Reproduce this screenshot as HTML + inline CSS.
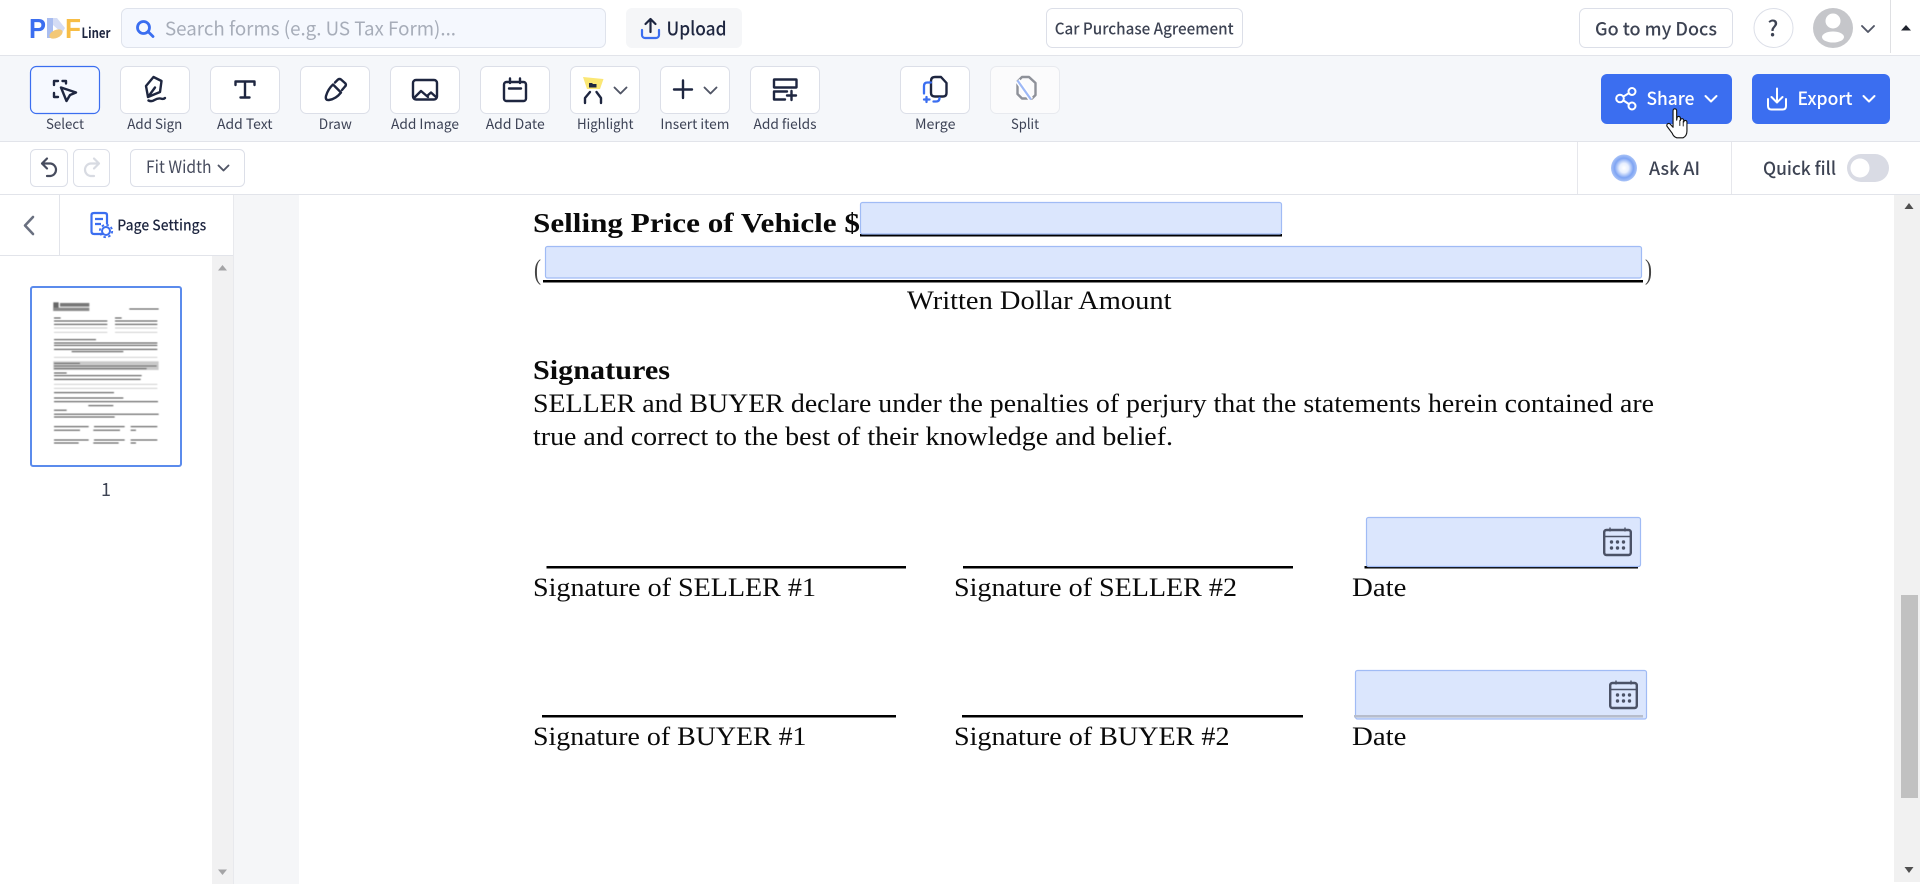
<!DOCTYPE html>
<html><head><meta charset="utf-8"><title>PDFLiner</title>
<style>
html,body{margin:0;padding:0;width:1920px;height:884px;overflow:hidden;background:#fff}
svg{position:absolute;left:0;top:0;display:block}
.u{font-family:"Noto Sans CJK JP","Liberation Sans",sans-serif}
.l{font-size:14px;fill:#3d4356}
.d{font-family:"Liberation Serif",serif;font-size:26px;fill:#0a0a0a}
.b{font-weight:700}
.box{fill:#fff;stroke:#dcdfe8;stroke-width:1}
.ic{fill:none;stroke:#1e2640;stroke-width:2.4;stroke-linecap:round;stroke-linejoin:round}
.ch{fill:none;stroke:#515666;stroke-width:1.9;stroke-linecap:round;stroke-linejoin:round}
.f{fill:#dbe6fd;stroke:#a0bbf5;stroke-width:1.2}
.w{fill:none;stroke:#fff;stroke-width:2;stroke-linecap:round;stroke-linejoin:round}
</style></head>
<body>
<svg width="1920" height="884" viewBox="0 0 1920 884" xmlns="http://www.w3.org/2000/svg">
<defs>
<radialGradient id="ai" cx="50%" cy="50%" r="50%"><stop offset="0" stop-color="#fff"/><stop offset=".35" stop-color="#e8effe"/><stop offset=".72" stop-color="#7ea4f3"/><stop offset="1" stop-color="#a9c3f7"/></radialGradient>
<filter id="bl" x="-5%" y="-5%" width="110%" height="110%"><feGaussianBlur stdDeviation="1.6"/></filter>
<g id="cal"><rect x="1.2" y="3" width="26.6" height="25" rx="2.2" fill="none" stroke="#4b5266" stroke-width="2.4"/><path d="M1 9.5H28" stroke="#4b5266" stroke-width="1.6"/><path d="M7 0.5V4.5M22 0.5V4.5" stroke="#4b5266" stroke-width="1.4"/><g fill="#4b5266"><circle cx="8.5" cy="15" r="1.7"/><circle cx="14.5" cy="15" r="1.7"/><circle cx="20.5" cy="15" r="1.7"/><circle cx="8.5" cy="21" r="1.7"/><circle cx="14.5" cy="21" r="1.7"/><circle cx="20.5" cy="21" r="1.7"/></g></g>
</defs>

<!-- header -->
<rect width="1920" height="55" fill="#fff"/>
<rect y="55" width="1920" height="1" fill="#e2e4ea"/>
<text x="29" y="38" font-family="Liberation Sans" font-weight="700" font-size="28" fill="#3b6ef0" textLength="17" lengthAdjust="spacingAndGlyphs">P</text>
<polygon points="47,18 53,18 53,38 47,38" fill="#a9bdf0"/>
<polygon points="53,18 57,18 65,28 62,33 53,25" fill="#d4dcf5"/>
<ellipse cx="56" cy="34" rx="7" ry="4" fill="#f3c877" transform="rotate(-25 56 34)"/>
<text x="65" y="38" font-family="Liberation Sans" font-weight="700" font-size="28" fill="#f7bd45" textLength="16" lengthAdjust="spacingAndGlyphs">F</text>
<text x="81.5" y="38" class="u" font-weight="700" font-size="14" fill="#1e2640" textLength="29" lengthAdjust="spacingAndGlyphs">Liner</text>

<rect x="121.5" y="8.5" width="484" height="39" rx="6" fill="#f5f8fe" stroke="#dfe3ec"/>
<circle cx="143.500" cy="27.500" r="6" fill="none" stroke="#3b6ef0" stroke-width="2.800"/>
<path d="M148.500 32L153 36.500" stroke="#3b6ef0" stroke-width="2.800" stroke-linecap="round"/>
<text x="165" y="35.500" class="u" font-size="19" fill="#a7adb9" textLength="291" lengthAdjust="spacingAndGlyphs">Search forms (e.g. US Tax Form)...</text>

<rect x="626" y="8" width="116" height="40" rx="6" fill="#f5f6f8"/>
<path d="M650.5 32V19M645.5 24l5-5 5 5" fill="none" stroke="#1e2640" stroke-width="2.2" stroke-linecap="round" stroke-linejoin="round"/>
<path d="M642 30v5a3 3 0 0 0 3 3h11a3 3 0 0 0 3-3v-5" fill="none" stroke="#3b6ef0" stroke-width="2.2" stroke-linecap="round"/>
<text x="666.5" y="35.500" class="u" font-size="19" font-weight="500" fill="#1e2640" textLength="60" lengthAdjust="spacingAndGlyphs">Upload</text>

<rect x="1046.5" y="8.5" width="196" height="39" rx="6" class="box" stroke="#e4e6ec"/>
<text x="1054.7" y="34.500" class="u" font-size="16" font-weight="500" fill="#3d4353" textLength="179" lengthAdjust="spacingAndGlyphs">Car Purchase Agreement</text>

<rect x="1579.5" y="8.5" width="153" height="39" rx="6" class="box"/>
<text x="1595" y="35.500" class="u" font-size="18.5" font-weight="500" fill="#3d4353" textLength="122" lengthAdjust="spacingAndGlyphs">Go to my Docs</text>
<circle cx="1773.5" cy="28" r="19.5" class="box"/>
<text x="1767.500" y="36" class="u" font-size="22" font-weight="500" fill="#3d4353">?</text>
<circle cx="1833" cy="28" r="20" fill="#c5c6ca"/>
<circle cx="1833" cy="21" r="7.5" fill="#fff"/>
<ellipse cx="1833" cy="37" rx="11" ry="5.5" fill="#fff"/>
<path d="M1862 26l6 6 6-6" class="ch" stroke-width="2.2"/>
<rect x="1890" y="0" width="1" height="53" fill="#dfe0e3"/>
<polygon points="1906,25 1911,30.5 1901,30.5" fill="#20242e"/>

<!-- toolbar -->
<rect y="56" width="1920" height="85" fill="#f5f7fa"/>
<rect y="141" width="1920" height="1" fill="#e2e4ea"/>

<rect x="30.5" y="66.5" width="69" height="47" rx="6" fill="#f6f9ff" stroke="#3b6ef0" stroke-width="1.2"/>
<rect x="120.5" y="66.5" width="69" height="47" rx="6" class="box"/>
<rect x="210.5" y="66.5" width="69" height="47" rx="6" class="box"/>
<rect x="300.5" y="66.5" width="69" height="47" rx="6" class="box"/>
<rect x="390.5" y="66.5" width="69" height="47" rx="6" class="box"/>
<rect x="480.5" y="66.5" width="69" height="47" rx="6" class="box"/>
<rect x="570.5" y="66.5" width="69" height="47" rx="6" class="box"/>
<rect x="660.5" y="66.5" width="69" height="47" rx="6" class="box"/>
<rect x="750.5" y="66.5" width="69" height="47" rx="6" class="box"/>
<rect x="900.5" y="66.5" width="69" height="47" rx="6" class="box"/>
<rect x="990.5" y="66.5" width="69" height="47" rx="6" fill="#fbfbfc" stroke="#e8eaef"/>

<!-- select -->
<path class="ic" d="M54 85v-4h4M62.500 81H66v2.500M54 93v4h4"/>
<path class="ic" d="M61 87.500L76 92.500L70 95L66.500 101Z"/>
<!-- sign -->
<path class="ic" d="M146 86L153.500 77L161.500 81L160 92L148 97ZM148 97L155 87.500"/>
<path class="ic" d="M148.500 100.500q3 1.500 6-0.500t6-1.500q3 1 4.500-0.500"/>
<!-- text -->
<path class="ic" d="M235.500 85v-3.500h19V85M245 81.500v16M240.500 97.500h9"/>
<!-- draw -->
<path class="ic" d="M333 84.500Q328 89 326 96Q325 100.500 329 100Q336 99 341 92.500ZM335 82.500L338 79.500Q339.500 78.500 341 79.500L345.500 83.500Q346.500 85 345 86.500L342 90"/>
<!-- image -->
<rect x="413" y="80" width="24" height="19.500" rx="3" class="ic"/>
<path class="ic" stroke-width="2" d="M414 98L421 91L428 97M427 96L431 92.500L436 97"/>
<!-- date -->
<rect x="504" y="82" width="22" height="19" rx="2.500" class="ic"/>
<path class="ic" d="M510 78.500V83M520 78.500V83M509 88.500H521"/>
<!-- highlight -->
<polygon points="583,77 603.500,79 600,89 587,89" fill="#fbe775"/>
<path d="M589 83h3l1 1h3.500v3.500H589Z" fill="#1e2640"/>
<path class="ic" d="M585 103V98L590 92M596.500 92L601 98V103"/>
<path class="ch" d="M614.500 87.500l6 6 6-6"/>
<!-- plus -->
<path class="ic" stroke-width="2.600" d="M683 80.500V98M674 89.500H692"/>
<path class="ch" d="M704.500 87.500l6 6 6-6"/>
<!-- add fields -->
<rect x="774" y="79.500" width="22.500" height="8" class="ic" stroke-linecap="butt" rx=".5"/>
<path class="ic" d="M787 91.500H774V99.500H785M791.500 91V100M787 95.500H796"/>
<!-- merge -->
<path class="ic" d="M935 77H941L946.500 83V93Q946.500 96.500 943 96.500H935Q931 96.500 931 93V81Q931 77 935 77Z"/>
<path d="M931 82.500H927.500Q924 82.500 924 86V93.500M926.500 97V102M924 99.500H929.500M933.500 101.500H936Q939.500 101.500 939.500 98" fill="none" stroke="#3b6ef0" stroke-width="2.300" stroke-linecap="round"/>
<!-- split -->
<path d="M1022 77H1029L1035.500 83V95L1032 98.500H1022L1017.500 94V81.500Z" fill="none" stroke="#8e9199" stroke-width="2.400" stroke-linejoin="round"/>
<path d="M1017.500 80.500L1031 99.500" stroke="#fff" stroke-width="5"/>
<path d="M1017.500 80.500L1031 99.500" stroke="#9db8f6" stroke-width="2.200"/>

<g class="u l">
<text x="46" y="129" textLength="38" lengthAdjust="spacingAndGlyphs">Select</text>
<text x="127.300" y="129" textLength="55" lengthAdjust="spacingAndGlyphs">Add Sign</text>
<text x="217" y="129" textLength="55.500" lengthAdjust="spacingAndGlyphs">Add Text</text>
<text x="318.800" y="129" textLength="33" lengthAdjust="spacingAndGlyphs">Draw</text>
<text x="391" y="129" textLength="68" lengthAdjust="spacingAndGlyphs">Add Image</text>
<text x="485.700" y="129" textLength="59" lengthAdjust="spacingAndGlyphs">Add Date</text>
<text x="577" y="129" textLength="56.500" lengthAdjust="spacingAndGlyphs">Highlight</text>
<text x="660.400" y="129" textLength="69" lengthAdjust="spacingAndGlyphs">Insert item</text>
<text x="753.500" y="129" textLength="63" lengthAdjust="spacingAndGlyphs">Add fields</text>
<text x="915" y="129" textLength="40.500" lengthAdjust="spacingAndGlyphs">Merge</text>
<text x="1011" y="129" textLength="28" lengthAdjust="spacingAndGlyphs">Split</text>
</g>

<!-- share / export -->
<rect x="1601" y="74" width="131" height="50" rx="6" fill="#3b6ef0"/>
<circle cx="1620" cy="98.500" r="3.800" class="w"/>
<circle cx="1632" cy="91.500" r="3.500" class="w"/>
<circle cx="1632" cy="106" r="3.500" class="w"/>
<path class="w" d="M1623.500 96.500L1628.800 93.200M1623.500 100.500L1628.800 104"/>
<text x="1646.500" y="105" class="u" font-size="18" font-weight="500" fill="#fff" textLength="48" lengthAdjust="spacingAndGlyphs">Share</text>
<path class="w" d="M1705.500 96l5.500 5.500 5.500-5.500"/>
<rect x="1752" y="74" width="138" height="50" rx="6" fill="#3b6ef0"/>
<path class="w" d="M1777 88.500V102M1771.500 97l5.500 5.500 5.500-5.500M1768 99v7q0 3.500 3.500 3.500h11q3.500 0 3.500-3.500v-7"/>
<text x="1797.500" y="105" class="u" font-size="18" font-weight="500" fill="#fff" textLength="55" lengthAdjust="spacingAndGlyphs">Export</text>
<path class="w" d="M1863.500 96l5.500 5.500 5.500-5.500"/>

<!-- second row -->
<rect y="194" width="1920" height="1" fill="#e2e4ea"/>
<rect x="30.500" y="149.500" width="37" height="37" rx="5" class="box"/>
<rect x="73.500" y="149.500" width="36" height="37" rx="5" class="box"/>
<path d="M47 158.500L42 163.500L47 168.500M42 163.500H50.500A6.300 6.300 0 0 1 50.500 176H47" fill="none" stroke="#474c5e" stroke-width="2.200" stroke-linecap="round" stroke-linejoin="round"/>
<path d="M94 158.500L99 163.500L94 168.500M99 163.500H90.500A6.300 6.300 0 0 0 90.500 176H94" fill="none" stroke="#d8dbe2" stroke-width="2.200" stroke-linecap="round" stroke-linejoin="round"/>
<rect x="130.500" y="149.500" width="114" height="37" rx="5" class="box"/>
<text x="146" y="173" class="u" font-size="17" fill="#474c5e" textLength="65.500" lengthAdjust="spacingAndGlyphs">Fit Width</text>
<path class="ch" d="M218.500 165.500l5 5 5-5"/>
<rect x="1577" y="142" width="1" height="52" fill="#e6e7ec"/>
<rect x="1731" y="142" width="1" height="52" fill="#e6e7ec"/>
<ellipse cx="1624" cy="168" rx="13" ry="13.500" fill="url(#ai)"/>
<text x="1649" y="175" class="u" font-size="18" font-weight="500" fill="#3d4353" textLength="51" lengthAdjust="spacingAndGlyphs">Ask AI</text>
<text x="1763" y="175" class="u" font-size="18" font-weight="500" fill="#3d4353" textLength="73" lengthAdjust="spacingAndGlyphs">Quick fill</text>
<rect x="1847" y="154" width="42" height="28" rx="14" fill="#d9dbe4"/>
<circle cx="1860" cy="168" r="9.500" fill="#fff"/>

<!-- sidebar -->
<rect x="234" y="195" width="65" height="689" fill="#f5f6f8"/>
<rect x="233" y="195" width="1" height="689" fill="#e8e9ed"/>
<rect x="59" y="195" width="1" height="60" fill="#e2e4ea"/>
<rect x="0" y="255" width="233" height="1" fill="#e2e4ea"/>
<path d="M33 217L25 225.500L33 234" fill="none" stroke="#6a7080" stroke-width="2.600" stroke-linecap="round" stroke-linejoin="round"/>
<path d="M103 234H94Q91.500 234 91.500 231.500V215Q91.500 213 94 213H104.500Q107 213 107 215V224" fill="none" stroke="#3b6ef0" stroke-width="2.200"/>
<path d="M95 219H103M95 224H101" stroke="#3b6ef0" stroke-width="2.200"/>
<circle cx="106" cy="231" r="4" fill="#fff" stroke="#3b6ef0" stroke-width="2"/>
<circle cx="106" cy="231" r="6.200" fill="none" stroke="#3b6ef0" stroke-width="1.800" stroke-dasharray="2.500 2.400"/>
<text x="117.300" y="230.500" class="u" font-size="15" font-weight="500" fill="#1e2640" textLength="89" lengthAdjust="spacingAndGlyphs">Page Settings</text>

<rect x="212" y="256" width="21" height="628" fill="#f1f1f2"/>
<polygon points="222.500,265 227,270.500 218,270.500" fill="#a4a4a6"/>
<polygon points="222.500,875 227,869.500 218,869.500" fill="#a4a4a6"/>

<rect x="31" y="287" width="150" height="179" rx="2" fill="#fff" stroke="#5b8bec" stroke-width="2"/>
<g transform="translate(0 190) scale(.3333)" filter="url(#bl)">
<rect x="160" y="337" width="16" height="26" fill="#666"/>
<rect x="180" y="339" width="88" height="11" fill="#777"/>
<rect x="160" y="353" width="108" height="10" fill="#888"/>
<rect x="160" y="514" width="316" height="26" fill="#c9c9c9"/>
<path fill="none" stroke="#444" stroke-width="3" d="M388 357H476M162 384H182M345 384H365M162 393H322M345 393H472M162 403H322M345 403H472M162 449H288M162 459H472M162 466H472M162 478H472M215 485H370M162 520H240M162 528H470M162 536H440M162 549H200M162 557H425M162 568H422M162 608H342M162 624H370M162 635H474M265 647H340M162 661H200M162 673H476M162 681H344M162 710H266M282 710H374M392 710H472M162 721H240M280 721H360M392 721H408M162 750H266M282 750H374M392 750H472M162 759H236M280 759H356M392 759H408"/>
<path fill="none" stroke="#b4b4b4" stroke-width="2" d="M162 414H322M345 414H472M162 427H322M345 427H472M162 502H472M162 583H472M162 595H472"/>
</g>
<text x="101" y="496" class="u" font-size="18" fill="#3d4353">1</text>

<!-- document -->
<rect x="299" y="195" width="1595" height="689" fill="#fff"/>
<rect x="860" y="234" width="422" height="2.500" fill="#000"/>
<rect x="543" y="280" width="1100" height="2.500" fill="#000"/>
<rect x="546.500" y="566" width="359.500" height="2.500" fill="#000"/>
<rect x="963" y="566" width="330" height="2.500" fill="#000"/>
<rect x="1364.500" y="566" width="273.500" height="2.500" fill="#000"/>
<rect x="542" y="715" width="354" height="2.500" fill="#000"/>
<rect x="962" y="715" width="341" height="2.500" fill="#000"/>

<rect x="860.500" y="202.500" width="421" height="31.500" rx="2" class="f"/>
<rect x="545.500" y="246.500" width="1096" height="31.500" rx="2" class="f"/>
<rect x="1366.500" y="517.500" width="274" height="49" rx="2" class="f"/>
<rect x="1355.500" y="670.500" width="291" height="48.500" rx="2" class="f"/>
<rect x="1354" y="715" width="289" height="2.500" fill="#b7bdcc"/>
<use href="#cal" x="1603" y="527"/>
<use href="#cal" x="1609" y="680"/>

<g class="d">
<text x="533" y="232" class="b" font-size="27" textLength="327" lengthAdjust="spacingAndGlyphs">Selling Price of Vehicle $</text>
<text x="534" y="279" font-size="29" fill="#444" textLength="7" lengthAdjust="spacingAndGlyphs">(</text>
<text x="1645" y="279" font-size="29" fill="#444" textLength="7" lengthAdjust="spacingAndGlyphs">)</text>
<text x="907" y="309" textLength="264.500" lengthAdjust="spacingAndGlyphs">Written Dollar Amount</text>
<text x="533" y="379" class="b" font-size="27" textLength="137" lengthAdjust="spacingAndGlyphs">Signatures</text>
<text x="533" y="412" textLength="1121" lengthAdjust="spacingAndGlyphs">SELLER and BUYER declare under the penalties of perjury that the statements herein contained are</text>
<text x="533" y="445" textLength="640" lengthAdjust="spacingAndGlyphs">true and correct to the best of their knowledge and belief.</text>
<text x="533" y="596" textLength="283" lengthAdjust="spacingAndGlyphs">Signature of SELLER #1</text>
<text x="954" y="596" textLength="283" lengthAdjust="spacingAndGlyphs">Signature of SELLER #2</text>
<text x="1352" y="596" textLength="54.500" lengthAdjust="spacingAndGlyphs">Date</text>
<text x="533" y="745" textLength="273.500" lengthAdjust="spacingAndGlyphs">Signature of BUYER #1</text>
<text x="954" y="745" textLength="275.500" lengthAdjust="spacingAndGlyphs">Signature of BUYER #2</text>
<text x="1352" y="745" textLength="54.500" lengthAdjust="spacingAndGlyphs">Date</text>
</g>

<!-- main scrollbar -->
<rect x="1894" y="195" width="26" height="687" fill="#f1f1f1"/>
<rect x="1901" y="595" width="17" height="203" fill="#c1c1c1"/>
<polygon points="1909,203 1913.500,209 1904.500,209" fill="#505050"/>
<polygon points="1909,873 1913.500,867 1904.500,867" fill="#505050"/>

<!-- cursor -->
<g transform="translate(1677 123) scale(1.13) translate(-1676 -123)">
<path d="M1672.500 112a1.600 1.600 0 0 1 3.200 0v8.500l.3-2a1.500 1.500 0 0 1 3 .3v2a1.500 1.500 0 0 1 3-.2v1.500a1.400 1.400 0 0 1 2.800 0v8q0 4.500-3.500 6h-5.500q-3-1-4-4l-4.500-6a1.700 1.700 0 0 1 2.800-2l2.400 2.700z" fill="#fff" stroke="#111" stroke-width="1" stroke-linejoin="round"/>
<path d="M1678.500 120.500v5M1681.500 121v5" stroke="#111" stroke-width=".8"/>
</g>
</svg>
</body></html>
